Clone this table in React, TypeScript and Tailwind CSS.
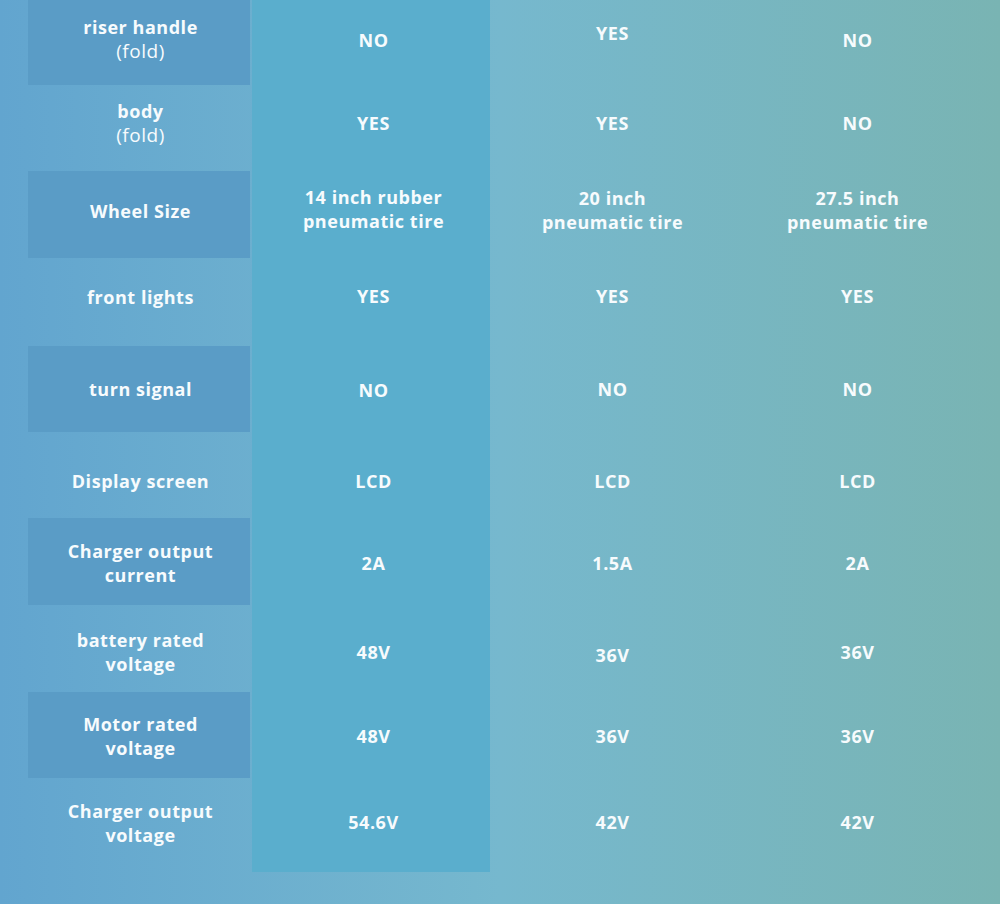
import React from "react";

const labels: string[][] = [
  ["riser handle", "(fold)"],
  ["body", "(fold)"],
  ["Wheel Size"],
  ["front lights"],
  ["turn signal"],
  ["Display screen"],
  ["Charger output", "current"],
  ["battery rated", "voltage"],
  ["Motor rated", "voltage"],
  ["Charger output", "voltage"],
];

const heights = [85, 86, 87, 88, 86, 86, 87, 87, 86, 87];

const col2: string[][] = [
  ["NO"], ["YES"], ["14 inch rubber", "pneumatic tire"], ["YES"], ["NO"], ["LCD"], ["2A"], ["48V"], ["48V"], ["54.6V"],
];
const col3: string[][] = [
  ["YES"], ["YES"], ["20 inch", "pneumatic tire"], ["YES"], ["NO"], ["LCD"], ["1.5A"], ["36V"], ["36V"], ["42V"],
];
const col4: string[][] = [
  ["NO"], ["NO"], ["27.5 inch", "pneumatic tire"], ["YES"], ["NO"], ["LCD"], ["2A"], ["36V"], ["36V"], ["42V"],
];

const offsetsL = [-4, -5, -4, -5, 0, 6, 1, 3, 1, 1];
const offsets2 = [-3, -5, -6, -6, 1, 6, 1, 3, 1, 0];
const offsets3 = [-10, -5, -5, -6, 0, 6, 1, 6, 1, 0];
const offsets4 = [-3, -5, -5, -6, 0, 6, 1, 3, 1, 0];

function Cell({ lines, h, dy, className }: { lines: string[]; h: number; dy: number; className?: string }) {
  return (
    <div
      className={"flex flex-col items-center justify-center text-center " + (className ?? "")}
      style={{ height: h }}
    >
      <div style={{ transform: `translateY(${dy}px)` }} className="leading-[24px]">
        {lines.map((l, i) => (
          <div key={i} className={l === "(fold)" ? "font-normal text-[19px]" : ""}>
            {l}
          </div>
        ))}
      </div>
    </div>
  );
}

export default function App() {
  return (
    <div
      className="w-[1000px] h-[904px] overflow-hidden bg-gradient-to-r from-[#62a5cf] via-[#76b8ce] to-[#79b4b3] text-[#f7fbfd] text-[18px] tracking-[0.03em] font-bold flex pl-[28px]"
      style={{ fontFamily: "'Open Sans', Lato, sans-serif" }}
    >
      <div className="w-[222px] flex flex-col">
        {labels.map((l, i) => (
          <Cell
            key={i}
            lines={l}
            h={heights[i]}
            dy={offsetsL[i]}
            className={"pl-[3px] " + (i % 2 === 0 ? "bg-[#5a9cc6]" : "")}
          />
        ))}
      </div>
      <div className="w-[238px] ml-[2px] self-start flex flex-col bg-[#5aaecd] pb-[7px] pl-[5px]">
        {col2.map((l, i) => (
          <Cell key={i} lines={l} h={heights[i]} dy={offsets2[i]} />
        ))}
      </div>
      <div className="w-[245px] flex flex-col">
        {col3.map((l, i) => (
          <Cell key={i} lines={l} h={heights[i]} dy={offsets3[i]} />
        ))}
      </div>
      <div className="w-[245px] flex flex-col">
        {col4.map((l, i) => (
          <Cell key={i} lines={l} h={heights[i]} dy={offsets4[i]} />
        ))}
      </div>
    </div>
  );
}
